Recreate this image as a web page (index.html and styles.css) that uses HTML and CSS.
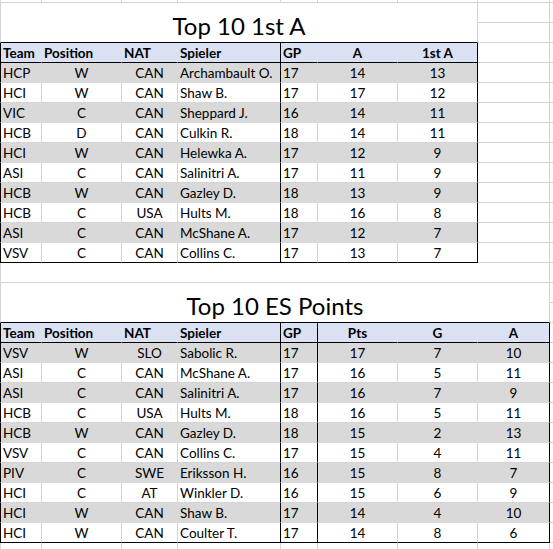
FILE: index.html
```html
<!DOCTYPE html>
<html>
<head>
<meta charset="utf-8">
<link rel="stylesheet" href="styles.css">
</head>
<body>
<div class="sheet">
  <div class="row">
    <div class="cell a"></div><div class="cell"></div><div class="cell"></div><div class="cell"></div><div class="cell"></div><div class="cell"></div><div class="cell"></div><div class="cell"></div><div class="cell"></div>
  </div>
  <div class="row">
    <div class="cell a title span7">Top 10 1st A</div><div class="cell"></div><div class="cell"></div>
  </div>
  <div class="row">
    <div class="cell"></div><div class="cell"></div>
  </div>
  <div class="row t1 hd">
    <div class="cell in a l">Team</div><div class="cell in l">Position</div><div class="cell in l">NAT</div><div class="cell in d l">Spieler</div><div class="cell in l">GP</div><div class="cell in c">A</div><div class="cell in g c">1st A</div><div class="cell"></div><div class="cell"></div>
  </div>
  <div class="row t1 alt">
    <div class="cell in a l">HCP</div><div class="cell in c">W</div><div class="cell in c">CAN</div><div class="cell in d l">Archambault O.</div><div class="cell in l">17</div><div class="cell in c">14</div><div class="cell in g c">13</div><div class="cell"></div><div class="cell"></div>
  </div>
  <div class="row t1">
    <div class="cell in a l">HCI</div><div class="cell in c">W</div><div class="cell in c">CAN</div><div class="cell in d l">Shaw B.</div><div class="cell in l">17</div><div class="cell in c">17</div><div class="cell in g c">12</div><div class="cell"></div><div class="cell"></div>
  </div>
  <div class="row t1 alt">
    <div class="cell in a l">VIC</div><div class="cell in c">C</div><div class="cell in c">CAN</div><div class="cell in d l">Sheppard J.</div><div class="cell in l">16</div><div class="cell in c">14</div><div class="cell in g c">11</div><div class="cell"></div><div class="cell"></div>
  </div>
  <div class="row t1">
    <div class="cell in a l">HCB</div><div class="cell in c">D</div><div class="cell in c">CAN</div><div class="cell in d l">Culkin R.</div><div class="cell in l">18</div><div class="cell in c">14</div><div class="cell in g c">11</div><div class="cell"></div><div class="cell"></div>
  </div>
  <div class="row t1 alt">
    <div class="cell in a l">HCI</div><div class="cell in c">W</div><div class="cell in c">CAN</div><div class="cell in d l">Helewka A.</div><div class="cell in l">17</div><div class="cell in c">12</div><div class="cell in g c">9</div><div class="cell"></div><div class="cell"></div>
  </div>
  <div class="row t1">
    <div class="cell in a l">ASI</div><div class="cell in c">C</div><div class="cell in c">CAN</div><div class="cell in d l">Salinitri A.</div><div class="cell in l">17</div><div class="cell in c">11</div><div class="cell in g c">9</div><div class="cell"></div><div class="cell"></div>
  </div>
  <div class="row t1 alt">
    <div class="cell in a l">HCB</div><div class="cell in c">W</div><div class="cell in c">CAN</div><div class="cell in d l">Gazley D.</div><div class="cell in l">18</div><div class="cell in c">13</div><div class="cell in g c">9</div><div class="cell"></div><div class="cell"></div>
  </div>
  <div class="row t1">
    <div class="cell in a l">HCB</div><div class="cell in c">C</div><div class="cell in c">USA</div><div class="cell in d l">Hults M.</div><div class="cell in l">18</div><div class="cell in c">16</div><div class="cell in g c">8</div><div class="cell"></div><div class="cell"></div>
  </div>
  <div class="row t1 alt">
    <div class="cell in a l">ASI</div><div class="cell in c">C</div><div class="cell in c">CAN</div><div class="cell in d l">McShane A.</div><div class="cell in l">17</div><div class="cell in c">12</div><div class="cell in g c">7</div><div class="cell"></div><div class="cell"></div>
  </div>
  <div class="row t1 last">
    <div class="cell in a l">VSV</div><div class="cell in c">C</div><div class="cell in c">CAN</div><div class="cell in d l">Collins C.</div><div class="cell in l">17</div><div class="cell in c">13</div><div class="cell in g c">7</div><div class="cell"></div><div class="cell"></div>
  </div>
  <div class="row">
    <div class="cell a span8"></div><div class="cell"></div>
  </div>
  <div class="row">
    <div class="cell a title span8">Top 10 ES Points</div><div class="cell"></div>
  </div>
  <div class="row">
    <div class="cell"></div>
  </div>
  <div class="row t2 hd">
    <div class="cell in a l">Team</div><div class="cell in l">Position</div><div class="cell in l">NAT</div><div class="cell in d l">Spieler</div><div class="cell in e l">GP</div><div class="cell in c">Pts</div><div class="cell in c">G</div><div class="cell in h c">A</div><div class="cell"></div>
  </div>
  <div class="row t2 alt">
    <div class="cell in a l">VSV</div><div class="cell in c">W</div><div class="cell in c">SLO</div><div class="cell in d l">Sabolic R.</div><div class="cell in e l">17</div><div class="cell in c">17</div><div class="cell in c">7</div><div class="cell in h c">10</div><div class="cell"></div>
  </div>
  <div class="row t2">
    <div class="cell in a l">ASI</div><div class="cell in c">C</div><div class="cell in c">CAN</div><div class="cell in d l">McShane A.</div><div class="cell in e l">17</div><div class="cell in c">16</div><div class="cell in c">5</div><div class="cell in h c">11</div><div class="cell"></div>
  </div>
  <div class="row t2 alt">
    <div class="cell in a l">ASI</div><div class="cell in c">C</div><div class="cell in c">CAN</div><div class="cell in d l">Salinitri A.</div><div class="cell in e l">17</div><div class="cell in c">16</div><div class="cell in c">7</div><div class="cell in h c">9</div><div class="cell"></div>
  </div>
  <div class="row t2">
    <div class="cell in a l">HCB</div><div class="cell in c">C</div><div class="cell in c">USA</div><div class="cell in d l">Hults M.</div><div class="cell in e l">18</div><div class="cell in c">16</div><div class="cell in c">5</div><div class="cell in h c">11</div><div class="cell"></div>
  </div>
  <div class="row t2 alt">
    <div class="cell in a l">HCB</div><div class="cell in c">W</div><div class="cell in c">CAN</div><div class="cell in d l">Gazley D.</div><div class="cell in e l">18</div><div class="cell in c">15</div><div class="cell in c">2</div><div class="cell in h c">13</div><div class="cell"></div>
  </div>
  <div class="row t2">
    <div class="cell in a l">VSV</div><div class="cell in c">C</div><div class="cell in c">CAN</div><div class="cell in d l">Collins C.</div><div class="cell in e l">17</div><div class="cell in c">15</div><div class="cell in c">4</div><div class="cell in h c">11</div><div class="cell"></div>
  </div>
  <div class="row t2 alt">
    <div class="cell in a l">PIV</div><div class="cell in c">C</div><div class="cell in c">SWE</div><div class="cell in d l">Eriksson H.</div><div class="cell in e l">16</div><div class="cell in c">15</div><div class="cell in c">8</div><div class="cell in h c">7</div><div class="cell"></div>
  </div>
  <div class="row t2">
    <div class="cell in a l">HCI</div><div class="cell in c">C</div><div class="cell in c">AT</div><div class="cell in d l">Winkler D.</div><div class="cell in e l">16</div><div class="cell in c">15</div><div class="cell in c">6</div><div class="cell in h c">9</div><div class="cell"></div>
  </div>
  <div class="row t2 alt">
    <div class="cell in a l">HCI</div><div class="cell in c">W</div><div class="cell in c">CAN</div><div class="cell in d l">Shaw B.</div><div class="cell in e l">17</div><div class="cell in c">14</div><div class="cell in c">4</div><div class="cell in h c">10</div><div class="cell"></div>
  </div>
  <div class="row t2 last">
    <div class="cell in a l">HCI</div><div class="cell in c">W</div><div class="cell in c">CAN</div><div class="cell in d l">Coulter T.</div><div class="cell in e l">17</div><div class="cell in c">14</div><div class="cell in c">8</div><div class="cell in h c">6</div><div class="cell"></div>
  </div>
  <div class="row">
    <div class="cell a"></div><div class="cell"></div><div class="cell"></div><div class="cell"></div><div class="cell"></div><div class="cell"></div><div class="cell"></div><div class="cell"></div><div class="cell"></div>
  </div>
</div>
</body>
</html>
```

FILE: styles.css
```css
html, body {
  margin: 0;
  padding: 0;
  overflow: hidden;
  background: #ffffff;
}

body {
  font-family: Lato, "Liberation Sans", sans-serif;
  font-size: 13.5px;
  color: #000000;
}

.sheet {
  display: grid;
  grid-template-columns: 42px 80px 56px 103px 37px 80px 80px 72px 1fr;
  grid-template-rows: 3px repeat(28, 20px);
  width: 553px;
  height: 549px;
  overflow: hidden;
}

.row {
  display: contents;
}

.cell {
  box-sizing: border-box;
  border-right: 1px solid #d4d4d4;
  border-bottom: 1px solid #d4d4d4;
  padding: 1px 2px 0;
  line-height: 18px;
  white-space: nowrap;
  overflow: hidden;
  background: #ffffff;
}

.a {
  border-left: 1px solid #d4d4d4;
}

.l {
  text-align: left;
}

.c {
  text-align: center;
}

.span7 {
  grid-column: span 7;
}

.span8 {
  grid-column: span 8;
}

.title {
  grid-row: span 2;
  display: flex;
  align-items: flex-end;
  justify-content: center;
  font-size: 24px;
  line-height: 28px;
  padding: 0 2px 2px;
  border-bottom-color: #000000;
}

.hd .in {
  background: #d9e1f2;
  border-right-color: #d9e1f2;
  border-bottom-color: #000000;
  font-weight: 700;
}

.alt .in {
  background: #d9d9d9;
  border-right-color: #d9d9d9;
  border-bottom-color: #d9d9d9;
}

.last .in {
  border-bottom-color: #000000;
}

.in.a {
  border-left-color: #000000;
}

.t1 .d,
.t1 .g,
.t2 .d,
.t2 .e,
.t2 .h {
  border-right-color: #000000;
}
```
